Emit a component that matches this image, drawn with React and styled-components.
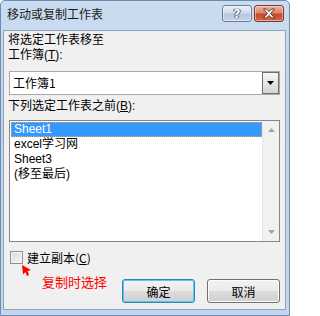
import React, { useState } from "react";
import styled, { createGlobalStyle } from "styled-components";

const GlobalStyle = createGlobalStyle`
  html, body {
    margin: 0;
    padding: 0;
    background: #ffffff;
  }
  * {
    box-sizing: border-box;
  }
`;

const FONT = `"Noto Sans CJK SC", "Liberation Sans", sans-serif`;
const TIGHT_FONT = `"Liberation Sans", "Noto Sans CJK SC", sans-serif`;

const Window = styled.div`
  width: 290px;
  height: 316px;
  background: linear-gradient(180deg, #cadcf0 0%, #bfd3ea 40%, #c4d7ee 100%);
  border: 1px solid #6e8bb0;
  border-radius: 5px 5px 0 0;
  display: flex;
  flex-direction: column;
  font-family: ${FONT};
  font-size: 12px;
  color: #000;
  overflow: hidden;
`;

const TitleBar = styled.div`
  height: 29px;
  display: flex;
  align-items: flex-start;
  padding: 4px 5px 0 6px;
`;

const Title = styled.div`
  flex: 1;
  line-height: 18px;
  font-size: 12px;
  color: #1a1a1a;
`;

const CapButton = styled.div`
  width: 30px;
  height: 17px;
  margin-left: ${({ gap }) => gap || 0}px;
  border-radius: 3px;
  display: flex;
  align-items: center;
  justify-content: center;
  border: 1px solid ${({ danger }) => (danger ? "#7b3627" : "#6d7d94")};
  background: ${({ danger }) =>
    danger
      ? "linear-gradient(180deg, #eab3a4 0%, #d98670 45%, #c5472c 55%, #d0694d 100%)"
      : "linear-gradient(180deg, #e7eef7 0%, #cfdbea 45%, #b6c7de 55%, #c6d5e8 100%)"};
  box-shadow: inset 0 0 0 1px rgba(255, 255, 255, 0.45);
`;

const HelpGlyph = styled.span`
  font-family: "DejaVu Sans", sans-serif;
  font-weight: bold;
  font-size: 12px;
  line-height: 12px;
  color: #ffffff;
  text-shadow: 0 0 1px #3c4a5e, 0 0 1px #3c4a5e, 1px 0 0 #55657c, -1px 0 0 #55657c;
`;

const Body = styled.div`
  margin-left: 2px;
  width: 283px;
  height: 280px;
  background: #f0f0f0;
  border: 1px solid #8fa3bb;
  padding: 0 5px 0 4px;
  display: flex;
  flex-direction: column;
`;

const Label = styled.div`
  height: 15px;
  line-height: 15px;
  margin-top: ${({ top }) => top || 0}px;
  font-family: ${TIGHT_FONT};
  white-space: nowrap;
`;

const Combo = styled.div`
  margin: 8px 0 0 1px;
  width: 271px;
  height: 24px;
  background: #ffffff;
  border: 1px solid #a9a9a9;
  display: flex;
  align-items: stretch;
`;

const ComboText = styled.div`
  flex: 1;
  padding-left: 3px;
  line-height: 22px;
  font-size: 12px;
`;

const DropButton = styled.div`
  width: 17px;
  border: 1px solid #6f6f6f;
  background: linear-gradient(180deg, #f6f6f6 0%, #e6e6e6 50%, #d4d4d4 100%);
  display: flex;
  align-items: center;
  justify-content: center;
`;

const List = styled.div`
  margin: 6px 0 0 1px;
  width: 271px;
  height: 122px;
  background: #ffffff;
  border: 1px solid #828790;
  display: flex;
`;

const Items = styled.div`
  flex: 1;
  padding: 1px 0 0 1px;
`;

const Item = styled.div`
  height: 15px;
  line-height: 15px;
  padding-left: 3px;
  font-family: ${TIGHT_FONT};
  font-size: 12px;
  white-space: nowrap;
  color: ${({ selected }) => (selected ? "#ffffff" : "#000000")};
  background: ${({ selected }) => (selected ? "#3399ff" : "transparent")};
  outline: ${({ selected }) => (selected ? "1px dotted #f0a35a" : "none")};
  outline-offset: -1px;
  cursor: default;
`;

const ScrollBar = styled.div`
  width: 17px;
  background: #f1f1f1;
  border-left: 1px solid #e6e6e6;
  display: flex;
  flex-direction: column;
  justify-content: space-between;
  align-items: center;
  padding: 7px 0 7px;
`;

const CheckRow = styled.div`
  position: relative;
  margin-top: 7px;
  height: 16px;
  display: flex;
  align-items: center;
  gap: 4px;
  padding-left: 2px;
`;

const CheckBox = styled.div`
  width: 13px;
  height: 13px;
  border: 1px solid #8e8f8f;
  background: linear-gradient(135deg, #dcdcdc 0%, #f4f4f4 100%);
  box-shadow: inset 0 0 0 1px #f4f4f4;
  cursor: pointer;
  display: flex;
  align-items: center;
  justify-content: center;
  font-size: 10px;
  line-height: 10px;
`;

const CheckLabel = styled.span`
  line-height: 15px;
`;

const Pointer = styled.svg`
  position: absolute;
  left: 14px;
  top: 16px;
`;

const Footer = styled.div`
  display: flex;
  align-items: flex-start;
`;

const Note = styled.div`
  margin: 9px 0 0 34px;
  color: #ff0000;
  font-size: 13px;
  line-height: 16px;
  flex: 1;
  white-space: nowrap;
`;

const Button = styled.button`
  margin-top: 14px;
  margin-left: ${({ gap }) => gap || 0}px;
  width: 73px;
  height: 24px;
  font-family: ${FONT};
  font-size: 12px;
  color: #000;
  border-radius: 3px;
  border: 1px solid ${({ primary }) => (primary ? "#3c7fb1" : "#707070")};
  background: linear-gradient(180deg, #f2f2f2 0%, #ebebeb 48%, #dddddd 52%, #cfcfcf 100%);
  box-shadow: ${({ primary }) =>
    primary ? "inset 0 0 0 1px #48d0f8" : "inset 0 0 0 1px #fcfcfc"};
  padding: 0;
  cursor: pointer;
`;

const sheets = ["Sheet1", "excel学习网", "Sheet3", "(移至最后)"];

export default function App() {
  const [selected, setSelected] = useState(0);
  const [copy, setCopy] = useState(false);

  return (
    <>
      <GlobalStyle />
      <Window>
        <TitleBar>
          <Title>移动或复制工作表</Title>
          <CapButton>
            <HelpGlyph>?</HelpGlyph>
          </CapButton>
          <CapButton danger gap={2}>
            <svg width="14" height="11" viewBox="0 0 14 11">
              <path
                d="M1.5 1 L4.5 1 L7 3.6 L9.5 1 L12.5 1 L8.6 5.5 L12.5 10 L9.5 10 L7 7.4 L4.5 10 L1.5 10 L5.4 5.5 Z"
                fill="#ffffff"
                stroke="#5a2418"
                strokeWidth="0.9"
                strokeLinejoin="round"
              />
            </svg>
          </CapButton>
        </TitleBar>
        <Body>
          <Label top={2}>将选定工作表移至</Label>
          <Label>
            工作簿(<u>T</u>):
          </Label>
          <Combo>
            <ComboText>工作簿1</ComboText>
            <DropButton>
              <svg width="7" height="4" viewBox="0 0 7 4">
                <path d="M0 0 H7 L3.5 4 Z" fill="#000" />
              </svg>
            </DropButton>
          </Combo>
          <Label top={4}>
            下列选定工作表之前(<u>B</u>):
          </Label>
          <List>
            <Items>
              {sheets.map((name, i) => (
                <Item key={name} selected={i === selected} onClick={() => setSelected(i)}>
                  {name}
                </Item>
              ))}
            </Items>
            <ScrollBar>
              <svg width="7" height="4" viewBox="0 0 7 4">
                <path d="M3.5 0 L7 4 H0 Z" fill="#a3a3a3" />
              </svg>
              <svg width="7" height="4" viewBox="0 0 7 4">
                <path d="M0 0 H7 L3.5 4 Z" fill="#a3a3a3" />
              </svg>
            </ScrollBar>
          </List>
          <CheckRow>
            <CheckBox onClick={() => setCopy(!copy)}>{copy ? "✓" : ""}</CheckBox>
            <CheckLabel>
              建立副本(<u>C</u>)
            </CheckLabel>
            <Pointer width="10" height="11" viewBox="0 0 10 11">
              <path d="M0 0 L9 5 L5.5 6 L7 10 L5 11 L3.5 7 L1 9.5 Z" fill="#ff0000" />
            </Pointer>
          </CheckRow>
          <Footer>
            <Note>复制时选择</Note>
            <Button primary>确定</Button>
            <Button gap={12}>取消</Button>
          </Footer>
        </Body>
      </Window>
    </>
  );
}
